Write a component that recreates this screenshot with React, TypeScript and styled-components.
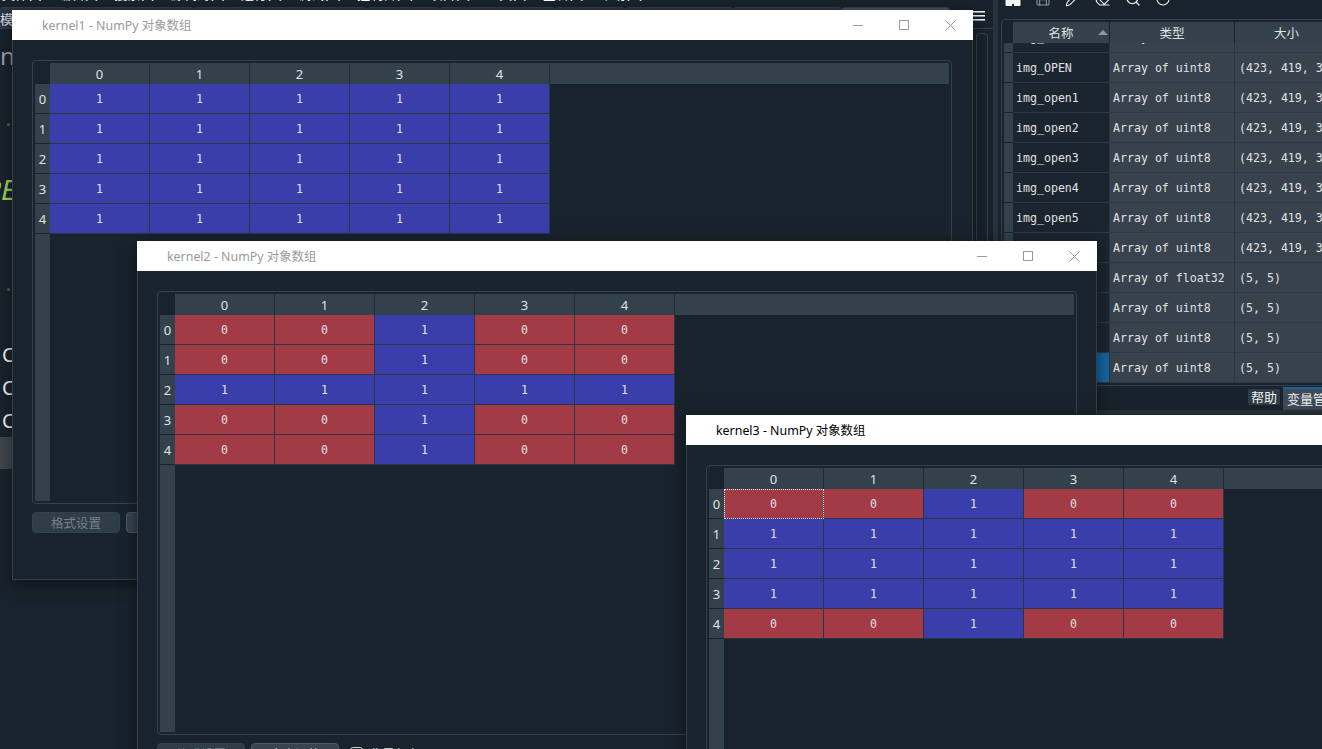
import React from "react";
import styled, { createGlobalStyle, css } from "styled-components";
import { Save, Pencil, Eraser, Search, RotateCw } from "lucide-react";

const UI = `"Noto Sans", "Noto Sans CJK SC", sans-serif`;
const MONO = `"DejaVu Sans Mono", "Liberation Mono", monospace`;

const C = {
  bg: "#19232D",
  panel: "#32414B",
  light: "#E0E1E3",
  blue: "#393EAB",
  red: "#A33B47",
  grid: "#2B3642",
  sel: "#1464A0",
};

const GlobalStyle = createGlobalStyle`
  html, body { margin: 0; padding: 0; background: ${C.bg}; }
  body { width: 1322px; height: 749px; overflow: hidden; font-family: ${UI}; }
  #root { width: 1322px; height: 749px; }
`;

const Desktop = styled.div`
  position: relative;
  width: 1322px;
  height: 749px;
  overflow: hidden;
  background: ${C.bg};
`;

const Ide = styled.div`
  display: flex;
  width: 100%;
  height: 100%;
`;

/* ---------- left editor area ---------- */
const LeftArea = styled.div`
  width: 993px;
  flex-shrink: 0;
  display: flex;
  flex-direction: column;
  overflow: hidden;
`;

const MenuStrip = styled.div`
  height: 4px;
  flex-shrink: 0;
  overflow: hidden;
`;
const MenuText = styled.div`
  margin-top: -13px;
  padding-left: 2px;
  font-size: 13px;
  line-height: 15px;
  color: #fff;
  white-space: nowrap;
  word-spacing: 12px;
`;

const TabStrip = styled.div`
  height: 25px;
  flex-shrink: 0;
  display: flex;
  align-items: flex-end;
  border-bottom: 1px solid ${C.panel};
  box-sizing: border-box;
`;
const EdTab = styled.div<{ $w: number; $active?: boolean }>`
  width: ${(p) => p.$w}px;
  flex-shrink: 0;
  height: 21px;
  box-sizing: border-box;
  background: ${(p) => (p.$active ? "#455364" : "#2a3642")};
  border: 1px solid ${C.panel};
  border-bottom: none;
  border-left: none;
  border-radius: 3px 3px 0 0;
  padding-top: 2px;
  font-size: 13px;
  line-height: 18px;
  color: ${C.light};
  white-space: nowrap;
  overflow: hidden;
`;
const Hamburger = styled.div`
  margin-left: auto;
  margin-right: 8px;
  align-self: center;
  display: flex;
`;

const EditorBody = styled.div`
  flex: 1;
  display: flex;
  min-height: 0;
`;
const Gutter = styled.div`
  width: 12px;
  flex-shrink: 0;
  display: flex;
  flex-direction: column;
  overflow: hidden;
`;
const BigLetter = styled.div`
  margin-top: 13px;
  padding-left: 0;
  height: 28px;
  font-size: 24px;
  line-height: 28px;
  color: #9aa1a7;
  white-space: nowrap;
`;
const Dot = styled.div<{ $gap: number }>`
  margin-top: ${(p) => p.$gap}px;
  margin-left: 7px;
  width: 3px;
  height: 3px;
  border-radius: 50%;
  background: #4a6a4c;
  flex-shrink: 0;
`;
const GreenWord = styled.div`
  margin-top: 47px;
  margin-left: -15px;
  height: 32px;
  font-size: 28px;
  line-height: 32px;
  font-style: italic;
  color: #9fd35c;
  white-space: nowrap;
`;
const ConsoleLine = styled.div<{ $first?: boolean }>`
  margin-top: ${(p) => (p.$first ? 47 : 0)}px;
  padding-left: 2px;
  height: 33px;
  font-size: 20px;
  line-height: 33px;
  color: #f2f2f2;
  white-space: nowrap;
`;
const GrayBar = styled.div`
  height: 32px;
  background: #41474d;
  flex-shrink: 0;
`;
const EditorFrame = styled.div`
  flex: 1;
`;
const VScroll = styled.div`
  width: 12px;
  margin: 4px 5px 0 0;
  box-sizing: border-box;
  border: 1px solid ${C.panel};
  border-radius: 4px;
`;

const Splitter = styled.div`
  width: 5px;
  flex-shrink: 0;
  background: #26323d;
`;

/* ---------- right panel ---------- */
const RightPanel = styled.div`
  width: 324px;
  flex-shrink: 0;
  display: flex;
  flex-direction: column;
`;
const ToolBar = styled.div`
  height: 19px;
  flex-shrink: 0;
  display: flex;
  align-items: flex-start;
  gap: 14px;
  padding-left: 7px;
  overflow: hidden;
  & > svg {
    margin-top: -9px;
    flex-shrink: 0;
  }
`;
const VarFrame = styled.div`
  margin-left: 3px;
  width: 345px;
  height: 367px;
  flex-shrink: 0;
  box-sizing: border-box;
  border: 1px solid ${C.panel};
  border-radius: 4px;
  padding: 2px;
  display: flex;
  flex-direction: column;
`;
const VarHead = styled.div`
  height: 21px;
  flex-shrink: 0;
  display: flex;
`;
const VarCorner = styled.div`
  width: 9px;
  flex-shrink: 0;
`;
const VarHeadCell = styled.div<{ $w: number }>`
  width: ${(p) => p.$w}px;
  flex-shrink: 0;
  box-sizing: border-box;
  background: ${C.panel};
  border-right: 1px solid ${C.bg};
  display: flex;
  align-items: center;
  justify-content: center;
  font-size: 12.5px;
  color: ${C.light};
`;
const SortArrow = styled.span`
  width: 0;
  height: 0;
  border-left: 5px solid transparent;
  border-right: 5px solid transparent;
  border-bottom: 5px solid #8d979f;
  margin-left: 24px;
  margin-right: -34px;
`;
const VarBody = styled.div`
  height: 340px;
  overflow: hidden;
  flex-shrink: 0;
  display: flex;
  flex-direction: column;
`;
const VarRow = styled.div<{ $partial?: boolean }>`
  height: ${(p) => (p.$partial ? 10 : 30)}px;
  flex-shrink: 0;
  display: flex;
  overflow: hidden;
`;
const VarNum = styled.div`
  width: 9px;
  flex-shrink: 0;
  box-sizing: border-box;
  background: ${C.panel};
  border-bottom: 1px solid ${C.bg};
`;
const VarCell = styled.div<{ $w: number; $kind: "name" | "type" | "size"; $sel?: boolean; $partial?: boolean }>`
  width: ${(p) => p.$w}px;
  flex-shrink: 0;
  box-sizing: border-box;
  padding-left: ${(p) => (p.$kind === "size" ? 4 : 3)}px;
  background: ${(p) => (p.$sel ? C.sel : p.$kind === "name" ? "#1b2530" : "#37424d")};
  border-right: 1px solid #2a3540;
  border-bottom: 1px solid #2c3843;
  display: flex;
  align-items: ${(p) => (p.$partial ? "flex-end" : "center")};
  font-family: ${MONO};
  font-size: 11.6px;
  line-height: ${(p) => (p.$partial ? "29px" : "normal")};
  padding-top: ${(p) => (p.$partial ? 0 : 1)}px;
  color: ${C.light};
  white-space: pre;
  overflow: hidden;
`;
const PanelTabs = styled.div`
  width: 358px;
  height: 23px;
  flex-shrink: 0;
  display: flex;
  justify-content: flex-end;
  align-items: flex-start;
  gap: 3px;
  padding-top: 1px;
`;
const PTab = styled.div<{ $active?: boolean }>`
  ${(p) =>
    p.$active
      ? css`
          height: 21px;
          background: #3e4b57;
          border-top: 2px solid ${C.sel};
          line-height: 20px;
          padding: 0 4px;
        `
      : css`
          margin-top: 2px;
          height: 16px;
          background: #2f3c47;
          line-height: 16px;
          padding: 0 3px;
          border-radius: 2px;
        `}
  font-size: 13px;
  color: #f0f0f0;
  white-space: nowrap;
`;
const PanelFoot = styled.div`
  height: 6px;
  background: #27323c;
  flex-shrink: 0;
`;

/* ---------- array editor windows ---------- */
const Win = styled.div<{ $x: number; $y: number; $w: number; $h: number }>`
  position: absolute;
  left: ${(p) => p.$x}px;
  top: ${(p) => p.$y}px;
  width: ${(p) => p.$w}px;
  height: ${(p) => p.$h}px;
  box-sizing: border-box;
  border: 1px solid #363f48;
  border-top: none;
  background: ${C.bg};
  box-shadow: 0 3px 14px rgba(0, 0, 0, 0.5);
  display: flex;
  flex-direction: column;
`;
const TitleBar = styled.div`
  height: 30px;
  flex-shrink: 0;
  margin: 0 -1px;
  background: #fff;
  display: flex;
  align-items: center;
`;
const TitleText = styled.div<{ $active?: boolean }>`
  flex: 1;
  padding-left: 30px;
  font-size: 12.4px;
  color: ${(p) => (p.$active ? "#000" : "#9a9a9a")};
  white-space: nowrap;
`;
const CtrlBtn = styled.div`
  width: 46px;
  height: 30px;
  flex-shrink: 0;
  display: flex;
  align-items: center;
  justify-content: center;
`;
const WinBody = styled.div`
  flex: 1;
  padding: 20px 0 0 19px;
  display: flex;
  flex-direction: column;
`;
const Frame = styled.div`
  width: 920px;
  height: 444px;
  flex-shrink: 0;
  box-sizing: border-box;
  border: 1px solid ${C.panel};
  border-radius: 4px;
  padding: 2px;
  display: flex;
  flex-direction: column;
`;
const HeadRow = styled.div`
  height: 21px;
  flex-shrink: 0;
  display: flex;
`;
const Corner = styled.div`
  width: 15px;
  flex-shrink: 0;
`;
const ColHead = styled.div`
  width: 100px;
  flex-shrink: 0;
  box-sizing: border-box;
  background: ${C.panel};
  border-right: 1px solid #1f2a34;
  display: flex;
  align-items: center;
  justify-content: center;
  font-size: 13px;
  color: ${C.light};
`;
const HeadFill = styled.div`
  flex: 1;
  background: ${C.panel};
`;
const TBody = styled.div`
  flex: 1;
  display: flex;
`;
const RowHeads = styled.div`
  width: 15px;
  flex-shrink: 0;
  background: ${C.panel};
  display: flex;
  flex-direction: column;
`;
const RowHead = styled.div`
  height: 30px;
  box-sizing: border-box;
  border-bottom: 1px solid ${C.bg};
  display: flex;
  align-items: center;
  justify-content: center;
  font-size: 13px;
  color: ${C.light};
`;
const Grid = styled.div`
  display: flex;
  flex-direction: column;
`;
const DataRow = styled.div`
  display: flex;
`;
const Cell = styled.div<{ $v: number; $focus?: boolean }>`
  width: 100px;
  height: 30px;
  flex-shrink: 0;
  box-sizing: border-box;
  background: ${(p) => (p.$v ? C.blue : C.red)};
  border-right: 1px solid ${C.grid};
  border-bottom: 1px solid ${C.grid};
  display: flex;
  align-items: center;
  justify-content: center;
  font-family: ${MONO};
  font-size: 11.5px;
  color: ${C.light};
  ${(p) =>
    p.$focus &&
    css`
      outline: 1px dotted #f4f4f4;
      outline-offset: -1px;
    `}
`;
const ButtonRow = styled.div`
  margin-top: 8px;
  display: flex;
  align-items: center;
  gap: 6px;
`;
const Btn = styled.div<{ $disabled?: boolean }>`
  width: 88px;
  height: 21px;
  flex-shrink: 0;
  box-sizing: border-box;
  border-radius: 4px;
  background: ${(p) => (p.$disabled ? "#2f3d48" : "#37434f")};
  border: 1px solid ${(p) => (p.$disabled ? "#32414B" : "#4a5866")};
  display: flex;
  align-items: center;
  justify-content: center;
  font-size: 12.5px;
  color: ${(p) => (p.$disabled ? "#74808a" : C.light)};
`;
const CheckLabel = styled.div`
  margin-left: 5px;
  display: flex;
  align-items: center;
  gap: 6px;
  font-size: 13px;
  color: ${C.light};
`;
const CheckBox = styled.div`
  width: 13px;
  height: 13px;
  box-sizing: border-box;
  border: 1px solid #c8ccd0;
  border-radius: 3px;
`;

/* ---------- pieces ---------- */
const CtrlIcons = ({ color }: { color: string }) => (
  <>
    <CtrlBtn>
      <svg width="10" height="10" viewBox="0 0 10 10">
        <line x1="0" y1="5.5" x2="10" y2="5.5" stroke={color} strokeWidth="1" />
      </svg>
    </CtrlBtn>
    <CtrlBtn>
      <svg width="10" height="10" viewBox="0 0 10 10">
        <rect x="0.5" y="0.5" width="9" height="9" fill="none" stroke={color} strokeWidth="1" />
      </svg>
    </CtrlBtn>
    <CtrlBtn>
      <svg width="11" height="11" viewBox="0 0 11 11">
        <path d="M0.5 0.5 L10.5 10.5 M10.5 0.5 L0.5 10.5" stroke={color} strokeWidth="1" fill="none" />
      </svg>
    </CtrlBtn>
  </>
);

function ArrayTable({ data, focus }: { data: number[][]; focus?: boolean }) {
  return (
    <Frame>
      <HeadRow>
        <Corner />
        {data[0].map((_, j) => (
          <ColHead key={j}>{j}</ColHead>
        ))}
        <HeadFill />
      </HeadRow>
      <TBody>
        <RowHeads>
          {data.map((_, i) => (
            <RowHead key={i}>{i}</RowHead>
          ))}
        </RowHeads>
        <Grid>
          {data.map((row, i) => (
            <DataRow key={i}>
              {row.map((v, j) => (
                <Cell key={j} $v={v} $focus={focus && i === 0 && j === 0}>
                  {v}
                </Cell>
              ))}
            </DataRow>
          ))}
        </Grid>
      </TBody>
    </Frame>
  );
}

type WinProps = {
  name: string;
  x: number;
  y: number;
  w: number;
  h: number;
  data: number[][];
  active?: boolean;
  focus?: boolean;
  checkbox?: boolean;
};

function ArrayWindow({ name, x, y, w, h, data, active, focus, checkbox }: WinProps) {
  return (
    <Win $x={x} $y={y} $w={w} $h={h}>
      <TitleBar>
        <TitleText $active={active}>{name} - NumPy 对象数组</TitleText>
        <CtrlIcons color={active ? "#111" : "#9a9a9a"} />
      </TitleBar>
      <WinBody>
        <ArrayTable data={data} focus={focus} />
        <ButtonRow>
          <Btn $disabled>格式设置</Btn>
          <Btn>大小调整</Btn>
          {checkbox && (
            <CheckLabel>
              <CheckBox />
              背景颜色
            </CheckLabel>
          )}
        </ButtonRow>
      </WinBody>
    </Win>
  );
}

const ImportIcon = () => (
  <svg width="16" height="16" viewBox="0 0 16 16">
    <rect x="0.5" y="3" width="15" height="12" rx="1" fill="#f2f2f2" />
    <rect x="7" y="13" width="2" height="2" fill={C.bg} />
  </svg>
);

const k1 = Array.from({ length: 5 }, () => [1, 1, 1, 1, 1]);
const k2 = Array.from({ length: 5 }, (_, i) =>
  Array.from({ length: 5 }, (_, j) => (i === 2 || j === 2 ? 1 : 0))
);
const k3 = [
  [0, 0, 1, 0, 0],
  [1, 1, 1, 1, 1],
  [1, 1, 1, 1, 1],
  [1, 1, 1, 1, 1],
  [0, 0, 1, 0, 0],
];

const big = "(423, 419, 3)";
const vars = [
  { name: "img_close5", type: "Array of uint8", size: big },
  { name: "img_OPEN", type: "Array of uint8", size: big },
  { name: "img_open1", type: "Array of uint8", size: big },
  { name: "img_open2", type: "Array of uint8", size: big },
  { name: "img_open3", type: "Array of uint8", size: big },
  { name: "img_open4", type: "Array of uint8", size: big },
  { name: "img_open5", type: "Array of uint8", size: big },
  { name: "img_result", type: "Array of uint8", size: big },
  { name: "kernel", type: "Array of float32", size: "(5, 5)" },
  { name: "kernel1", type: "Array of uint8", size: "(5, 5)" },
  { name: "kernel2", type: "Array of uint8", size: "(5, 5)" },
  { name: "kernel3", type: "Array of uint8", size: "(5, 5)" },
];

const edTabs = [
  { w: 67, t: "模块" },
  { w: 127, t: "" },
  { w: 173, t: "" },
  { w: 73, t: "" },
  { w: 115, t: "" },
  { w: 70, t: "" },
  { w: 108, t: "" },
  { w: 109, t: "" },
  { w: 108, t: "", active: true },
];

export default function App() {
  return (
    <>
      <GlobalStyle />
      <Desktop>
        <Ide>
          <LeftArea>
            <MenuStrip>
              <MenuText>文件(F) 编辑(E) 搜索(S) 源代码(C) 运行(R) 调试(D) 控制台(O) 项目(P) 工具(T) 查看(V) 帮助(H)</MenuText>
            </MenuStrip>
            <TabStrip>
              {edTabs.map((t, i) => (
                <EdTab key={i} $w={t.w} $active={t.active}>
                  {t.t}
                </EdTab>
              ))}
              <Hamburger>
                <svg width="12" height="10" viewBox="0 0 12 10">
                  <rect x="0" y="0" width="12" height="1.6" fill="#f0f0f0" />
                  <rect x="0" y="4" width="12" height="1.6" fill="#f0f0f0" />
                  <rect x="0" y="8" width="12" height="1.6" fill="#f0f0f0" />
                </svg>
              </Hamburger>
            </TabStrip>
            <EditorBody>
              <Gutter>
                <BigLetter>n</BigLetter>
                <Dot $gap={53} />
                <GreenWord>PE</GreenWord>
                <Dot $gap={83} />
                <ConsoleLine $first>C</ConsoleLine>
                <ConsoleLine>C</ConsoleLine>
                <ConsoleLine>C</ConsoleLine>
                <GrayBar />
              </Gutter>
              <EditorFrame />
              <VScroll />
            </EditorBody>
          </LeftArea>
          <Splitter />
          <RightPanel>
            <ToolBar>
              <ImportIcon />
              <Save size={16} color="#8d979f" strokeWidth={1.6} />
              <Pencil size={16} color="#f0f0f0" strokeWidth={1.6} />
              <Eraser size={16} color="#f0f0f0" strokeWidth={1.6} />
              <Search size={16} color="#f0f0f0" strokeWidth={2} />
              <RotateCw size={16} color="#f0f0f0" strokeWidth={1.6} />
            </ToolBar>
            <VarFrame>
              <VarHead>
                <VarCorner />
                <VarHeadCell $w={97}>
                  名称
                  <SortArrow />
                </VarHeadCell>
                <VarHeadCell $w={125}>类型</VarHeadCell>
                <VarHeadCell $w={104}>大小</VarHeadCell>
              </VarHead>
              <VarBody>
                {vars.map((v, i) => {
                  const partial = i === 0;
                  return (
                    <VarRow key={v.name} $partial={partial}>
                      <VarNum />
                      <VarCell $w={97} $kind="name" $partial={partial} $sel={i === vars.length - 1}>
                        {v.name}
                      </VarCell>
                      <VarCell $w={125} $kind="type" $partial={partial}>
                        {v.type}
                      </VarCell>
                      <VarCell $w={104} $kind="size" $partial={partial}>
                        {v.size}
                      </VarCell>
                    </VarRow>
                  );
                })}
              </VarBody>
            </VarFrame>
            <PanelTabs>
              <PTab>帮助</PTab>
              <PTab $active>变量管理器</PTab>
            </PanelTabs>
            <PanelFoot />
          </RightPanel>
        </Ide>

        <ArrayWindow name="kernel1" x={12} y={10} w={961} h={570} data={k1} />
        <ArrayWindow name="kernel2" x={137} y={241} w={960} h={600} data={k2} checkbox />
        <ArrayWindow name="kernel3" x={686} y={415} w={960} h={600} data={k3} active focus checkbox />
      </Desktop>
    </>
  );
}
